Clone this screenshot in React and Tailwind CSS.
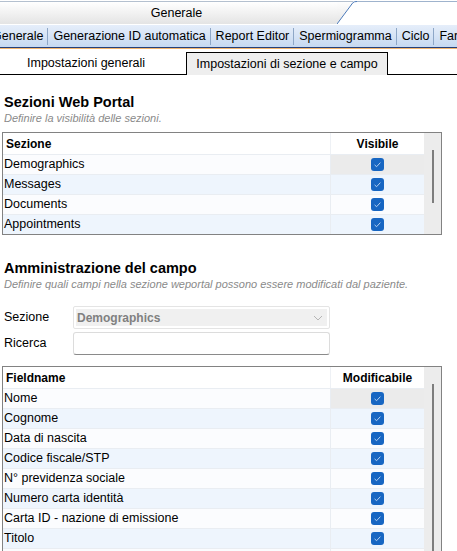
import React from "react";

const font = "font-['Liberation_Sans',Arial,sans-serif]";

const moduleTabs = ["Generale", "Generazione ID automatica", "Report Editor", "Spermiogramma", "Ciclo", "Farmaci"];

const sections = ["Demographics", "Messages", "Documents", "Appointments"];

const fields = [
  "Nome",
  "Cognome",
  "Data di nascita",
  "Codice fiscale/STP",
  "N° previdenza sociale",
  "Numero carta identità",
  "Carta ID - nazione di emissione",
  "Titolo",
];

function Check() {
  return (
    <span className="flex h-[13px] w-[13px] items-center justify-center rounded-[3px] bg-[#1766c2]">
      <svg width="13" height="13" viewBox="0 0 13 13">
        <polyline points="3.6,6.9 5.6,8.7 9.4,4.6" fill="none" stroke="#c6daf3" strokeWidth="0.9" />
      </svg>
    </span>
  );
}

function Grid({ title, column, rows, thumb, filler = 0 }) {
  return (
    <div className="ml-[2px] flex w-[440px] border border-[#828282]">
      <div className="w-[421px]">
        <div className="flex h-[21px] items-center bg-white text-[12px] font-bold">
          <div className="w-[327px] pl-[3px]">{title}</div>
          <div className="h-full w-px bg-[#eef1f5]" />
          <div className="flex flex-1 justify-center">{column}</div>
        </div>
        {rows.map((name, i) => (
          <div
            key={name}
            className={`flex h-[20px] items-center border-t border-[#e9edf2] ${i % 2 === 0 ? "bg-[#fbfcfe]" : "bg-[#eef5fd]"}`}
          >
            <div className="w-[327px] pl-[1px] text-[12.5px] leading-none">{name}</div>
            <div className="h-full w-px bg-[#e9edf2]" />
            <div className={`flex h-full flex-1 items-center justify-center ${i === 0 ? "bg-[#ebebeb]" : ""}`}>
              <Check />
            </div>
          </div>
        ))}
        {Array.from({ length: filler }).map((_, i) => (
          <div key={i} className="flex h-[20px] border-t border-[#e9edf2] bg-[#fbfcfe]">
            <div className="w-[327px]" />
            <div className="h-full w-px bg-[#e9edf2]" />
          </div>
        ))}
      </div>
      {/* vertical scrollbar */}
      <div className="flex w-[17px] justify-center bg-[#ececec] pt-[17px]">
        <div className={`w-[2px] bg-[#7d7d7d] ${thumb}`} />
      </div>
    </div>
  );
}

export default function App() {
  return (
    <div className={`${font} h-[551px] overflow-hidden bg-white text-black`}>
      {/* top level tab */}
      <div className="flex h-[24px] pt-px">
        <div className="flex w-[337px] items-center justify-center border-t border-[#b4c0cf] bg-gradient-to-b from-white to-[#e4e4e4] pl-[16px] text-[12.5px]">
          Generale
        </div>
        <svg width="20" height="23" viewBox="0 0 20 23" className="shrink-0">
          <defs>
            <linearGradient id="tabfill" x1="0" y1="0" x2="0" y2="1">
              <stop offset="0" stopColor="#ffffff" />
              <stop offset="1" stopColor="#e4e4e4" />
            </linearGradient>
          </defs>
          <polygon points="0,0 16,0 0,23" fill="url(#tabfill)" />
          <line x1="0" y1="0.5" x2="16" y2="0.5" stroke="#b4c0cf" />
          <path d="M0 23 L16 1.5 Q17 0.5 20 0.5" fill="none" stroke="#4a78b8" strokeWidth="1" />
        </svg>
        <div className="flex-1 border-t border-[#9fb3cd]" />
      </div>

      {/* module bar */}
      <div className="flex h-[24px] items-center overflow-hidden whitespace-nowrap border-b border-[#24407a] border-t border-t-white bg-gradient-to-b from-[#e6eefa] to-[#c6d9f1] text-[12.5px]">
        {moduleTabs.map((t, i) => (
          <React.Fragment key={t}>
            <span className={`shrink-0 pr-[4px] ${i === 0 ? "-ml-[8px]" : "pl-[5px]"}`}>{t}</span>
            {i < moduleTabs.length - 1 && <span className="h-[17px] w-px shrink-0 bg-[#8ea7c7]" />}
          </React.Fragment>
        ))}
      </div>
      <div className="h-px bg-[#f2b46e]" />

      {/* sub tabs */}
      <div className="mt-[3px] flex h-[23px] text-[12.5px]">
        <div className="flex w-[186px] items-center border-b border-black pl-[27px]">Impostazioni generali</div>
        <div className="flex w-[202px] items-center justify-center border border-b-0 border-black bg-[#eeeeee]">
          Impostazioni di sezione e campo
        </div>
        <div className="flex-1 border-b border-black" />
      </div>

      <div className="pl-[4px]">
        <h2 className="mt-[18px] text-[14.5px] font-bold leading-[18px]">Sezioni Web Portal</h2>
        <p className="text-[11px] italic leading-[14px] text-[#8a8a8a]">Definire la visibilità delle sezioni.</p>
      </div>
      <div className="mt-[7px]">
        <Grid title="Sezione" column="Visibile" rows={sections} thumb="h-[53px]" />
      </div>

      <div className="pl-[4px]">
        <h2 className="mt-[24px] text-[14.5px] font-bold leading-[18px]">Amministrazione del campo</h2>
        <p className="text-[11px] italic leading-[14px] text-[#8a8a8a]">
          Definire quali campi nella sezione weportal possono essere modificati dal paziente.
        </p>

        <div className="mt-[15px] flex items-center text-[12.5px]">
          <span className="w-[69px]">Sezione</span>
          <div className="flex h-[23px] w-[257px] rounded-[2px] border border-[#e4e4e4] p-[2px]">
            <div className="flex flex-1 items-center justify-between bg-[#f0f0f0] pl-[1px] pr-[4px]">
              <span className="text-[12px] font-bold text-[#808080]">Demographics</span>
              <svg width="10" height="6" viewBox="0 0 10 6">
                <polyline points="1,1 5,5 9,1" fill="none" stroke="#b5b5b5" strokeWidth="1" />
              </svg>
            </div>
          </div>
        </div>
        <div className="mt-[3px] flex items-center text-[12.5px]">
          <span className="w-[69px]">Ricerca</span>
          <div className="h-[23px] w-[257px] rounded-[3px] border border-[#dcdcdc] border-b-[#8a8a8a] bg-white" />
        </div>
      </div>

      <div className="mt-[11px]">
        <Grid title="Fieldname" column="Modificabile" rows={fields} thumb="h-[190px]" filler={2} />
      </div>
    </div>
  );
}
